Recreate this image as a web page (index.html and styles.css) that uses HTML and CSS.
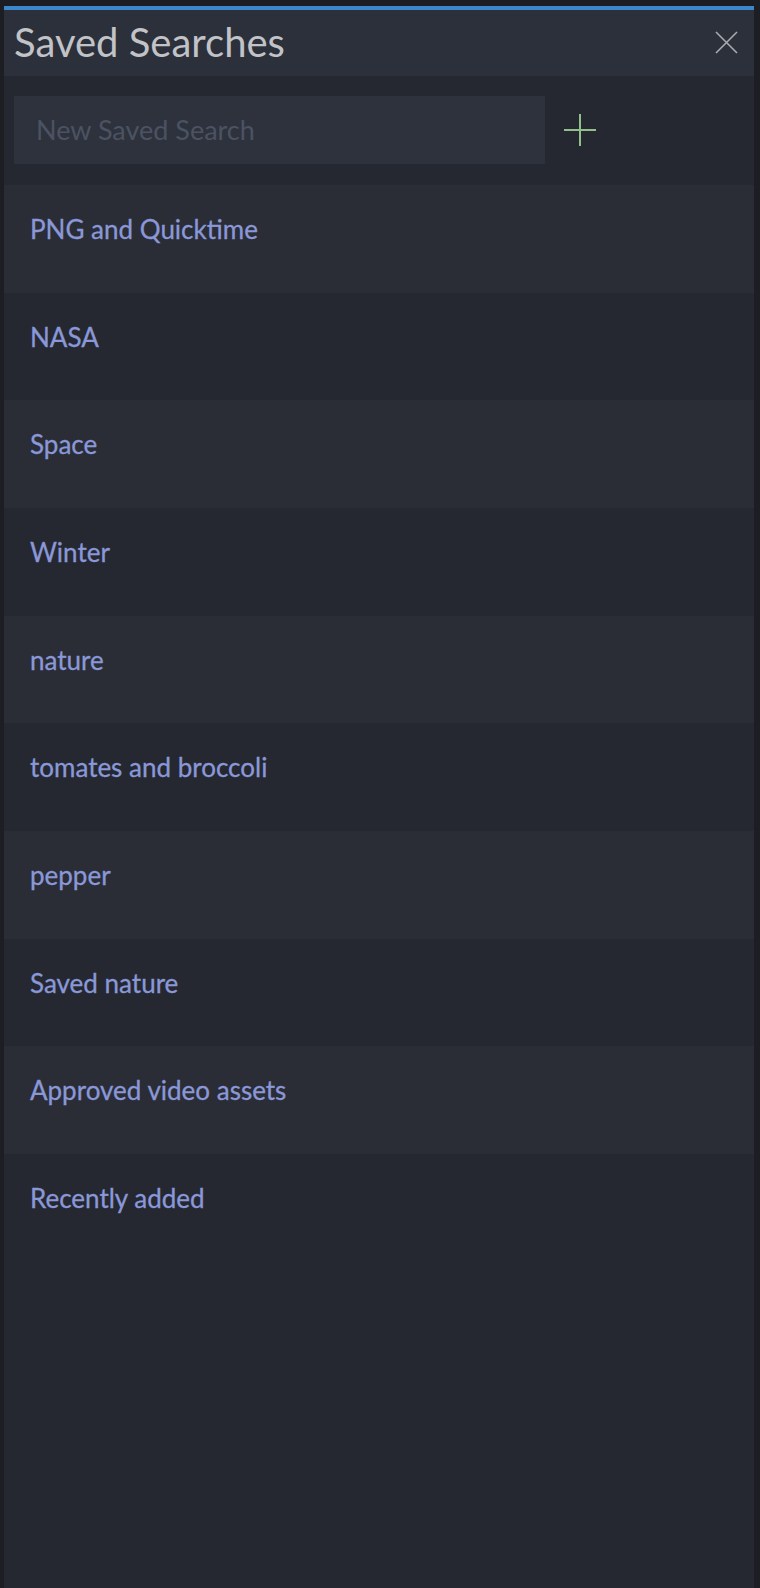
FILE: index.html
```html
<!DOCTYPE html>
<html lang="en">
<head>
<meta charset="utf-8">
<title>Saved Searches</title>
<link rel="stylesheet" href="styles.css">
</head>
<body>
<div class="panel">
  <header class="panel-header">
    <h1 class="panel-title">Saved Searches</h1>
    <button class="close-btn" aria-label="Close">
      <svg width="23" height="23" viewBox="0 0 23 23"><path d="M1 1 L22 22 M22 1 L1 22" stroke="#a9aaad" stroke-width="1.6" fill="none"/></svg>
    </button>
  </header>
  <div class="new-search">
    <input class="new-input" type="text" placeholder="New Saved Search">
    <button class="add-btn" aria-label="Add">
      <svg width="32" height="32" viewBox="0 0 32 32"><path d="M16 0 V32 M0 16 H32" stroke="#91c08b" stroke-width="2" fill="none"/></svg>
    </button>
  </div>
  <ul class="search-list">
    <li class="search-item">PNG and Quicktime</li>
    <li class="search-item">NASA</li>
    <li class="search-item">Space</li>
    <li class="search-item">Winter</li>
    <li class="search-item">nature</li>
    <li class="search-item">tomates and broccoli</li>
    <li class="search-item">pepper</li>
    <li class="search-item">Saved nature</li>
    <li class="search-item">Approved video assets</li>
    <li class="search-item">Recently added</li>
  </ul>
</div>
</body>
</html>
```
FILE: styles.css
```css
html, body {
  margin: 0;
  padding: 0;
  height: 100%;
}
body {
  background: #1c1e24;
  font-family: Lato, "Noto Sans", sans-serif;
  padding: 6px 6px 0 4px;
  box-sizing: border-box;
}
.panel {
  background: #252831;
  border-top: 4px solid #3b87c9;
  min-height: calc(100% - 4px);
  display: flex;
  flex-direction: column;
}
.panel-header {
  height: 66px;
  background: #2c303b;
  display: flex;
  align-items: center;
  justify-content: space-between;
  padding: 0 16px 0 10px;
}
.panel-title {
  margin: 0 0 3px 0;
  font-size: 40px;
  font-weight: 400;
  color: #c1c3c7;
}
.close-btn, .add-btn {
  background: none;
  border: 0;
  padding: 0;
  display: flex;
  cursor: pointer;
}
.close-btn { margin-bottom: 1px; }
.new-search {
  display: flex;
  align-items: center;
  padding: 20px 10px 21px 10px;
  gap: 19px;
}
.new-input {
  width: 531px;
  height: 68px;
  box-sizing: border-box;
  background: #2e323c;
  border: 0;
  outline: none;
  padding: 0 0 2px 22px;
  font-family: Lato, "Noto Sans", sans-serif;
  font-size: 27px;
  color: #c1c3c7;
}
.new-input::placeholder {
  color: #4b5263;
}
.search-list {
  list-style: none;
  margin: 0;
  padding: 0;
}
.search-item {
  height: 107.67px;
  box-sizing: border-box;
  padding: 28px 0 0 26px;
  font-size: 26px;
  line-height: 32px;
  color: #8a98d8;
  -webkit-text-stroke: 0.3px #8a98d8;
}
.search-item:nth-child(odd) {
  background: #2a2d36;
}
```
